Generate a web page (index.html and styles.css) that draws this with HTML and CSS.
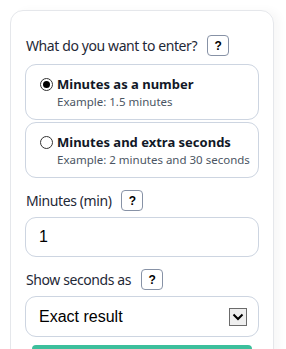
FILE: index.html
```html
<!DOCTYPE html>
<html>
<head>
<meta charset="utf-8">
<link rel="stylesheet" href="styles.css">
</head>
<body>
<div class="card">
  <div class="label-row">
    <span class="label">What do you want to enter?</span>
    <button class="help">?</button>
  </div>
  <div class="options">
    <label class="option">
      <span class="radio checked"></span>
      <span class="opt-text">
        <span class="opt-title">Minutes as a number</span>
        <span class="opt-sub">Example: 1.5 minutes</span>
      </span>
    </label>
    <label class="option">
      <span class="radio"></span>
      <span class="opt-text">
        <span class="opt-title">Minutes and extra seconds</span>
        <span class="opt-sub">Example: 2 minutes and 30 seconds</span>
      </span>
    </label>
  </div>
  <div class="label-row spaced">
    <span class="label">Minutes (min)</span>
    <button class="help">?</button>
  </div>
  <div class="field">1</div>
  <div class="label-row spaced">
    <span class="label">Show seconds as</span>
    <button class="help">?</button>
  </div>
  <div class="field select">
    <span>Exact result</span>
    <span class="arrow"><svg width="12" height="8" viewBox="0 0 12 8"><path d="M1.5 1.5 L6 6 L10.5 1.5" fill="none" stroke="#000" stroke-width="2"/></svg></span>
  </div>
  <div class="submit"></div>
</div>
</body>
</html>
```
FILE: styles.css
```css
html, body {
  margin: 0;
  padding: 0;
  background: #fff;
}
body {
  padding: 10px 0 0 10px;
  font-family: "Noto Sans", "Open Sans", sans-serif;
  color: #1f2937;
  overflow: hidden;
  height: 349px;
  box-sizing: border-box;
}
.card {
  width: 234px;
  height: 380px;
  border: 1px solid #e5e7eb;
  border-radius: 13px;
  padding: 24px 14px 0 14px;
  box-shadow: 6px 0 8px rgba(0,0,0,0.03);
  display: flex;
  flex-direction: column;
}
.label-row {
  display: flex;
  align-items: center;
  height: 21px;
}
.label-row.spaced { margin-top: 12px; }
.label {
  font-size: 14px;
  letter-spacing: -0.4px;
  color: #1f2937;
  margin-left: 1px;
}
.help {
  margin-left: 10px;
  width: 22px;
  height: 21px;
  border: 1px solid #8792a6;
  border-radius: 4px;
  background: #fff;
  font-family: "Liberation Sans", Arial, sans-serif;
  font-weight: bold;
  font-size: 12px;
  color: #000;
  padding: 0;
  display: flex;
  align-items: center;
  justify-content: center;
}
.options {
  margin-top: 8px;
  display: flex;
  flex-direction: column;
  gap: 2px;
}
.option {
  border: 1px solid #cdd5e1;
  border-radius: 11px;
  padding: 10px 8px 8px 14px;
  display: flex;
  align-items: flex-start;
  height: 36px;
}
.radio {
  width: 11px;
  height: 11px;
  border: 1px solid #333;
  border-radius: 50%;
  margin-top: 3px;
  margin-right: 4px;
  position: relative;
  flex: none;
}
.radio.checked::after {
  content: "";
  position: absolute;
  left: 2px;
  top: 2px;
  width: 7px;
  height: 7px;
  border-radius: 50%;
  background: #000;
}
.opt-text {
  display: flex;
  flex-direction: column;
}
.opt-title {
  font-weight: bold;
  font-size: 13px;
  line-height: 18px;
  color: #111827;
}
.opt-sub {
  font-size: 11.5px;
  line-height: 18px;
  color: #4b5563;
}
.field {
  margin-top: 6px;
  height: 38px;
  border: 1px solid #cdd5e1;
  border-radius: 11px;
  padding: 0 13px;
  display: flex;
  align-items: center;
  font-family: "Liberation Sans", Arial, sans-serif;
  font-size: 16px;
  color: #000;
}
.select {
  height: 39px;
  justify-content: space-between;
  padding-right: 11px;
}
.arrow {
  width: 16px;
  height: 16px;
  border: 1px solid #6b6b6b;
  background: #efefef;
  display: flex;
  align-items: center;
  justify-content: center;
}
.submit {
  margin: 8px 7px 0 7px;
  height: 20px;
  background: #3dbf9c;
  border-radius: 4px;
}
```
